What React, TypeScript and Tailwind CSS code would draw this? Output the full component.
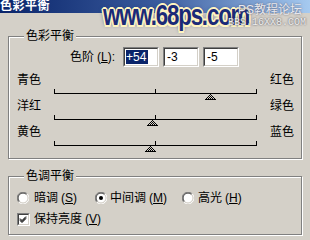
import React from 'react';

const winFont = "font-['Liberation_Sans','Noto_Sans_CJK_SC',sans-serif]";

function Thumb({ x }: { x: number }) {
  // dithered photoshop-style slider triangle, apex at y=7
  const cells: React.ReactElement[] = [];
  for (let r = 0; r < 6; r++) {
    for (let dx = -r; dx <= r; dx++) {
      const edge = dx === -r || dx === r || r === 5;
      if (edge || (dx + r) % 2 === 0) {
        cells.push(<rect key={`${r}-${dx}`} x={x + dx} y={7 + r} width={1} height={1} fill="#000" />);
      }
    }
  }
  return <g>{cells}</g>;
}

function Slider({ value }: { value: number }) {
  const pos = Math.round(101 + value * 1.01);
  return (
    <div className="h-[12px] pl-[45px]">
      <svg width="203" height="12" className="overflow-visible block">
        <rect x="0" y="2" width="1" height="5" fill="#000" />
        <rect x="101" y="2" width="1" height="5" fill="#000" />
        <rect x="202" y="2" width="1" height="5" fill="#000" />
        <rect x="0" y="6" width="203" height="1" fill="#000" />
        <Thumb x={pos} />
      </svg>
    </div>
  );
}

function ColorRow({ left, right, value }: { left: string; right: string; value: number }) {
  return (
    <div>
      <div className="flex justify-between pl-[8px] pr-[7px] h-[14px] leading-[14px]">
        <span>{left}</span>
        <span>{right}</span>
      </div>
      <Slider value={value} />
    </div>
  );
}

function Field({ value, selected }: { value: string; selected?: boolean }) {
  return (
    <div className="w-[36px] h-[20px] border border-t-[#808080] border-l-[#808080] border-b-white border-r-white">
      <div className="w-full h-full bg-white border border-t-[#404040] border-l-[#404040] border-b-[#d4d0c8] border-r-[#d4d0c8] flex items-center pl-[1px] text-[12px] leading-[14px]">
        <span className={selected ? 'bg-[#0a246a] text-white pr-[2px]' : 'pl-[1px]'}>{value}</span>
      </div>
    </div>
  );
}

function Radio({ checked }: { checked?: boolean }) {
  return (
    <svg width="12" height="12" className="block shrink-0">
      <circle cx="6" cy="6" r="5" fill="#fff" />
      <path d="M10.2,1.8 A5.9,5.9 0 0 0 1.8,10.2" stroke="#808080" fill="none" />
      <path d="M1.8,10.2 A5.9,5.9 0 0 0 10.2,1.8" stroke="#fff" fill="none" />
      <path d="M9.5,2.5 A4.9,4.9 0 0 0 2.5,9.5" stroke="#404040" fill="none" />
      <path d="M2.5,9.5 A4.9,4.9 0 0 0 9.5,2.5" stroke="#d4d0c8" fill="none" />
      {checked && <circle cx="6" cy="6" r="2" fill="#000" />}
    </svg>
  );
}

function Check() {
  return (
    <div className="w-[13px] h-[13px] border border-t-[#808080] border-l-[#808080] border-b-white border-r-white shrink-0">
      <div className="w-full h-full bg-white border border-t-[#404040] border-l-[#404040] border-b-[#d4d0c8] border-r-[#d4d0c8]">
        <svg width="9" height="9" className="block">
          <path d="M1,3.5 L3,5.5 L7,1.5 M1,4.5 L3,6.5 L7,2.5 M1,5.5 L3,7.5 L7,3.5" stroke="#000" fill="none" />
        </svg>
      </div>
    </div>
  );
}

function Group({ title, className, children }: { title: string; className: string; children: React.ReactNode }) {
  return (
    <div className={`relative w-[294px] border border-[#808080] shadow-[inset_1px_1px_0_#fff,1px_1px_0_#fff] ${className}`}>
      <span className="absolute -top-[8px] left-[15px] px-[2px] bg-[#d4d0c8] leading-[14px]">{title}</span>
      {children}
    </div>
  );
}

function Key({ k }: { k: string }) {
  return (
    <span className="ml-[3px]">
      (<span className="underline">{k}</span>)
    </span>
  );
}

export default function App() {
  return (
    <div className={`relative w-[310px] h-[240px] overflow-hidden bg-[#d4d0c8] text-[12px] text-black ${winFont}`}>
      <div className="h-[13px] bg-gradient-to-r from-[#0a246a] via-[#3a5a9c] to-[#a6caf0] text-white font-bold leading-[13px] tracking-[0.5px]">
        色彩平衡
      </div>

      {/* watermark */}
      <div className="absolute left-[103px] top-0 origin-left scale-x-[0.74] whitespace-nowrap text-[30px] leading-[30px] font-bold tracking-[-1.5px] text-[#1b2a78] font-['Liberation_Sans',sans-serif] [text-shadow:1.5px_1.5px_0_#fff4c0,-1.5px_-1.5px_0_#fff4c0,1.5px_-1.5px_0_#fff4c0,-1.5px_1.5px_0_#fff4c0,2px_0_0_#fff4c0,-2px_0_0_#fff4c0,0_2px_0_#fff4c0,0_-2px_0_#fff4c0,0_0_5px_#1b2a78]">
        www.68ps.com
      </div>
      <div className="absolute left-[238px] top-[3px] text-[12px] leading-[14px] text-[#e8e8ee] [text-shadow:0_0_2px_#556]">PS教程论坛</div>
      <div className="absolute left-[228px] top-[17px] text-[10px] leading-[12px] text-[#eeeeee] font-['Liberation_Mono',monospace] [text-shadow:0_0_2px_#334]">BBS.16XX8.COM</div>

      <div className="pl-[8px] pt-[23px]">
        <Group title="色彩平衡" className="h-[123px] pt-[10px]">
          <div className="flex items-center pl-[61px] h-[20px]">
            <span className="w-[51px] leading-[14px] whitespace-nowrap">
              色阶<Key k="L" />:
            </span>
            <div className="ml-[2px] flex gap-[4px]">
              <Field value="+54" selected />
              <Field value="-3" />
              <Field value="-5" />
            </div>
          </div>
          <div className="mt-[6px]">
            <ColorRow left="青色" right="红色" value={54} />
            <ColorRow left="洋红" right="绿色" value={-3} />
            <ColorRow left="黄色" right="蓝色" value={-5} />
          </div>
        </Group>

        <Group title="色调平衡" className="h-[59px] mt-[17px] pt-[15px]">
          <div className="flex items-center pl-[8px] h-[12px] leading-[14px]">
            <div className="w-[78px] flex items-center gap-[5px]">
              <Radio />
              <span className="whitespace-nowrap">暗调<Key k="S" /></span>
            </div>
            <div className="w-[87px] flex items-center gap-[3px]">
              <Radio checked />
              <span className="whitespace-nowrap">中间调<Key k="M" /></span>
            </div>
            <div className="flex items-center gap-[4px]">
              <Radio />
              <span className="whitespace-nowrap">高光<Key k="H" /></span>
            </div>
          </div>
          <div className="flex items-center pl-[8px] mt-[8px] gap-[4px] leading-[14px]">
            <Check />
            <span className="whitespace-nowrap">保持亮度<Key k="V" /></span>
          </div>
        </Group>
      </div>
    </div>
  );
}
